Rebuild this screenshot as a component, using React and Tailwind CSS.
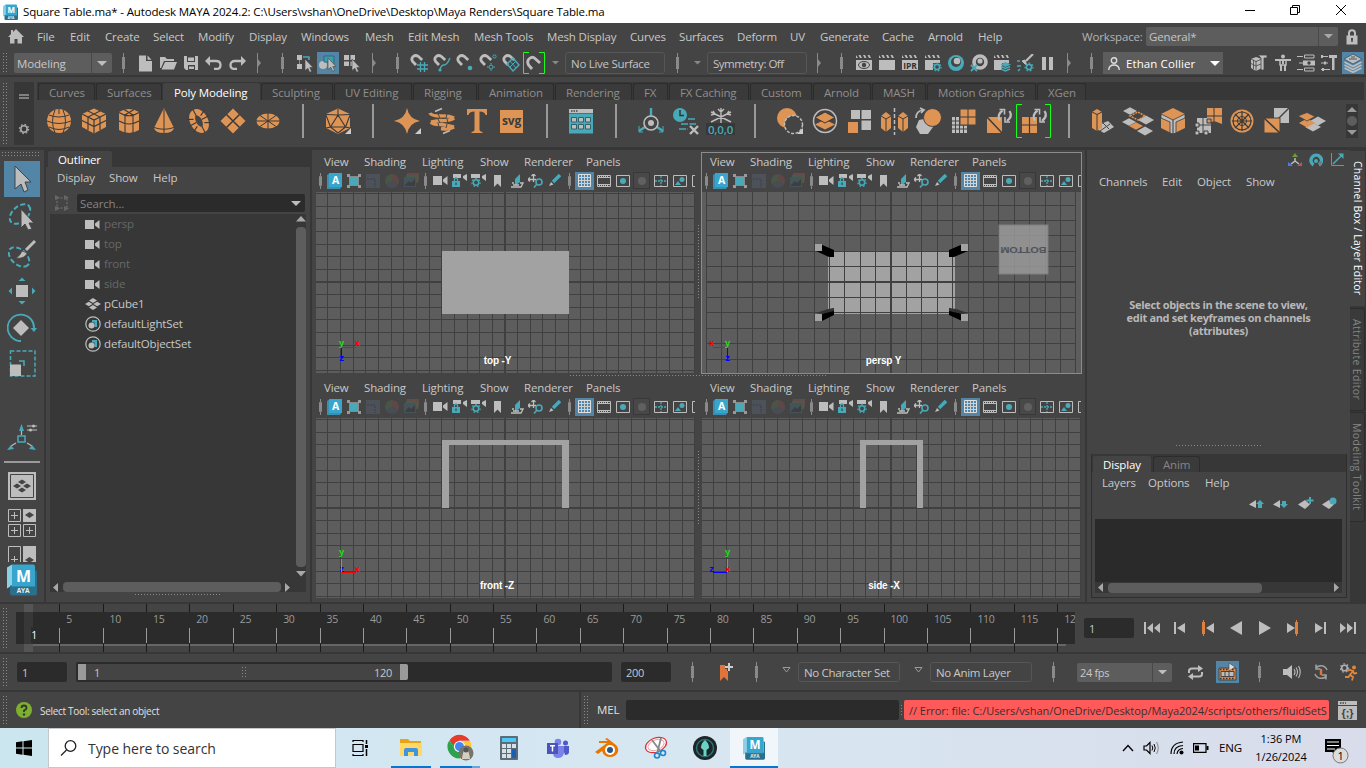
import React from "react";

const O = "#de9455";
const G = "#bdbdbd";
const T = "#48aab9";
const D = "#3a3a3a";

const DOTS = "bg-[conic-gradient(at_1px_1px,transparent_75%,#8a8a8a_0)] bg-[size:3px_3px]";

function Svg({ w = 18, h, vb, children, className = "" }) {
  return (
    <svg width={w} height={h || w} viewBox={vb || `0 0 ${w} ${h || w}`} fill="none" className={`shrink-0 ${className}`}>
      {children}
    </svg>
  );
}

function Sep({ className = "" }) {
  return (
    <div className={`flex h-5 w-[3px] shrink-0 flex-col items-center ${className}`}>
      <div className="h-[4px] w-px bg-[#8a8a8a]" />
      <div className="h-[12px] w-[3px] bg-[#8a8a8a]" />
      <div className="h-[4px] w-px bg-[#8a8a8a]" />
    </div>
  );
}

function Collapse({ className = "" }) {
  return (
    <Svg w={5} h={20} className={className}>
      <path d="M.5 0V20" stroke="#8a8a8a" />
      <path d="M0 5L4 10L0 15Z" fill="#8a8a8a" />
    </Svg>
  );
}

function Down({ className = "", fill = "#a8a8a8", w = 8 }) {
  return (
    <Svg w={w} h={w / 2} vb="0 0 8 4" className={className}>
      <path d="M0 0H8L4 4Z" fill={fill} />
    </Svg>
  );
}

/* ---------- Title bar ---------- */

function MayaLogo({ w, h, className = "" }) {
  return (
    <Svg w={w} h={h} vb="0 0 30 32" className={className}>
      <path d="M0 4L5 1V22L0 25Z" fill="#8ad0e6" />
      <path d="M3 22H28V6L30 8V30Q30 32 28 32H5Q3 32 3 30Z" fill="#2c6f8a" />
      <path d="M5 1H26Q28 1 28 3V23H5Z" fill="#38a5cc" />
      <text x="16.5" y="18" fill="#fff" fontSize="16" fontWeight="700" fontFamily="Open Sans, sans-serif" textAnchor="middle">M</text>
      <text x="16" y="29.8" fill="#e6f2f6" fontSize="6.5" fontWeight="700" fontFamily="Open Sans, sans-serif" textAnchor="middle">AYA</text>
    </Svg>
  );
}

function TitleBar() {
  return (
    <div className="flex h-[23px] items-center bg-white text-black">
      <MayaLogo w={15} h={16} className="ml-[3px]" />
      <span className="ml-[5px] text-[11.5px] tracking-[-0.13px]">
        Square Table.ma* - Autodesk MAYA 2024.2: C:\Users\vshan\OneDrive\Desktop\Maya Renders\Square Table.ma
      </span>
      <div className="ml-auto flex items-center pb-[3px] pr-[20px]">
        <Svg w={10} h={10}><path d="M0 5.5H10" stroke="#000" /></Svg>
        <Svg w={10} h={10} className="ml-[35px]"><path d="M.5 2.5H7.500V9.500H.5ZM2.500 2.500V.5H9.500V7.500H7.500" stroke="#000" /></Svg>
        <Svg w={10} h={10} className="ml-[36px]"><path d="M0 0L10 10M10 0L0 10" stroke="#000" /></Svg>
      </div>
    </div>
  );
}

/* ---------- Menu bar ---------- */

const MENUS = [
  ["File", "w-[33px]"], ["Edit", "w-[35px]"], ["Create", "w-[48px]"], ["Select", "w-[45px]"], ["Modify", "w-[51px]"],
  ["Display", "w-[52px]"], ["Windows", "w-[64px]"], ["Mesh", "w-[43px]"], ["Edit Mesh", "w-[66px]"],
  ["Mesh Tools", "w-[73px]"], ["Mesh Display", "w-[83px]"], ["Curves", "w-[49px]"], ["Surfaces", "w-[58px]"],
  ["Deform", "w-[53px]"], ["UV", "w-[30px]"], ["Generate", "w-[62px]"], ["Cache", "w-[46px]"], ["Arnold", "w-[50px]"],
  ["Help", "w-[104px]"],
];

function MenuBar() {
  return (
    <div className="flex h-[27px] items-center">
      <Svg w={16} h={15} className="ml-2"><path d="M8 0L16 8H14V14.500H9.500V10H6.500V14.500H2V8H0L3 5V1H5V3Z" fill={G} /></Svg>
      <div className="ml-[13px] flex text-[#c8c8c8]">
        {MENUS.map(([t, w]) => <span key={t} className={`shrink-0 ${w}`}>{t}</span>)}
      </div>
      <span className="w-[64px] shrink-0 text-[#b4b4b4]">Workspace:</span>
      <div className="flex h-[19px] w-[192px] shrink-0 rounded-[2px] bg-[#5d5d5d] text-[#c4c4c4]">
        <span className="flex-1 pl-[3px] leading-[20px]">General*</span>
        <span className="flex w-[20px] items-center justify-center border-l border-[#4a4a4a]"><Down w={9} /></span>
      </div>
      <Svg w={12} h={16} className="ml-2"><path d="M3 7V4Q3 1.200 6 1.200T9 4V7" stroke={G} strokeWidth="2" /><path d="M.5 6.500H11.500V15.500H.5Z" fill={G} /><path d="M6 9V13M5 10H7" stroke="#444" strokeWidth="1.500" /></Svg>
    </div>
  );
}

/* ---------- Status line ---------- */

const Cursor = ({ x = 0, y = 0 }) => (
  <path transform={`translate(${x} ${y})`} d="M0 0L8 8.500H4.800L6.600 12.500L4.600 13.300L2.900 9.300L0 11.500Z" fill={G} stroke="#444" strokeWidth=".6" />
);
const Magnet = () => (
  <path d="M6 11L2.600 7.500Q.8 4.500 3.200 2.500T8.200 2.300L12.200 6" stroke={G} strokeWidth="2.800" />
);
const Clap = ({ cut }) => (
  <g>
    <path d="M1 1L3 4H1ZM3.500 1H5.500L7 4H5ZM8 1H10L11.500 4H9.500ZM12.500 1H14.500L16 4H14Z" fill={G} />
    <path d={cut ? "M1 6H16V9H9V16H1Z" : "M1 6H17V16H1Z"} fill={G} />
  </g>
);
const Gear = ({ x, y, r = 3, c = T, w = 1.6 }) => (
  <g transform={`translate(${x} ${y})`} stroke={c}>
    <circle r={r} strokeWidth={w} />
    <circle r={r + w / 2 + 0.6} strokeWidth="1.200" strokeDasharray="1.600 2" />
  </g>
);

function BlueBox({ children, className = "w-[22px]" }) {
  return <div className={`flex h-[22px] shrink-0 items-center justify-center bg-[#5285a6] ${className}`}>{children}</div>;
}

function StatusLine() {
  return (
    <div className="flex h-[27px] items-center border-b-2 border-[#373737] pt-px">
      <div className={`ml-[3px] h-[20px] w-[5px] ${DOTS}`} />
      <div className="ml-[6px] flex h-5 w-[98px] shrink-0 rounded-[2px] bg-[#5d5d5d] text-[#c8c8c8]">
        <span className="flex-1 pl-[3px] leading-[21px]">Modeling</span>
        <span className="flex w-[21px] items-center justify-center border-l border-[#484848]"><Down w={10} fill="#bdbdbd" /></span>
      </div>
      <Sep className="ml-[10px]" />
      <Svg w={13} h={17} className="ml-[14px]"><path d="M0 .5H7V6H13V16.500H0ZM8.500 .5L12.500 4.800H8.500Z" fill={G} /></Svg>
      <Svg w={17} h={14} className="ml-[8px]"><path d="M0 1H5L7 3H14V5H4L1 12H0ZM5 6H17L14 13.500H1.500Z" fill={G} /></Svg>
      <Svg w={14} h={14} className="ml-[7px]"><path d="M0 0H14V14H2L0 12Z" fill={G} /><path d="M3 0H11V6H3ZM4 9H11V14H4Z" fill="#444" /><path d="M4 1.500H10V5H4ZM8 10.500H10V13H5V10.500Z" fill={G} /></Svg>
      <Svg w={17} h={14} className="ml-[7px]"><path d="M5 0V10L0 5Z" fill={G} /><path d="M4 5H11Q15.500 5 15.500 9T11 13H9" stroke={G} strokeWidth="2.300" /></Svg>
      <Svg w={17} h={14} className="ml-[7px]"><path d="M12 0V10L17 5Z" fill={G} /><path d="M13 5H6Q1.500 5 1.500 9T6 13H8" stroke={G} strokeWidth="2.300" /></Svg>
      <Collapse className="ml-[11px]" />
      <Sep className="ml-[19px]" />
      <Svg w={18} h={19} className="ml-[12px]"><path d="M1 1H6V6H1ZM1 10H6V15H1Z" fill={G} /><path d="M3.500 6V10" stroke={T} /><path d="M7 3H13V6" stroke={T} strokeWidth="1.500" /><Cursor x={9} y={5} /></Svg>
      <BlueBox className="ml-[3px] w-[22px]"><Svg w={20} h={20}><circle cx="5" cy="12" r="4" fill={G} /><path d="M6 3H16V14H11V9H6Z" fill="#2fa3b6" stroke="#3a6478" /><Cursor x={10} y={5} /></Svg></BlueBox>
      <Svg w={18} h={19} className="ml-[4px]"><path d="M1 1H6V6H1ZM7.500 1H12V6H7.500ZM1 7.500H6V12H1ZM7.500 7.500H10V12H7.500Z" fill={G} /><Cursor x={9} y={5} /></Svg>
      <Collapse className="ml-[11px]" />
      <Sep className="ml-[19px]" />
      <Svg w={18} h={18} className="ml-[11px]"><Magnet /><path d="M10.500 8V18M14.500 8V18M7 11H18M7 15H18" stroke={T} strokeWidth="1.300" /></Svg>
      <Svg w={18} h={18} className="ml-[5px]"><Magnet /><path d="M7 16Q8 11 11 11T17 4" stroke={T} strokeWidth="1.500" /><circle cx="7" cy="16" r="1.600" fill={T} /></Svg>
      <Svg w={18} h={18} className="ml-[5px]"><Magnet /><circle cx="14" cy="14" r="2.300" fill={T} /></Svg>
      <Svg w={18} h={18} className="ml-[5px]"><Magnet /><circle cx="12" cy="13" r="2" stroke={T} /><circle cx="15.500" cy="2.500" r="1.600" stroke={T} /><path d="M12 9V10.500M12 15.500V17M8 13H9.500M14.500 13H16" stroke={T} /></Svg>
      <Svg w={18} h={18} className="ml-[5px]"><Magnet /><path d="M11 4L17 11L11 17L5 10Z" stroke={T} strokeWidth="1.400" /><path d="M8 7L14 14M8 13L14 7" stroke={T} /></Svg>
      <Svg w={22} h={22} className="ml-[3px]"><path d="M6 .5H.5V21.500H6M16 .5H21.500V21.500H16" stroke="#17ff17" /><path d="M9 17L5.500 13Q3.500 9 6.500 6.500T12 6.500L17 11" stroke={G} strokeWidth="2.900" /></Svg>
      <Down className="ml-[7px]" w={7} fill="#888" />
      <div className="ml-[6px] h-[22px] w-[100px] shrink-0 rounded-[3px] border border-[#565656] pl-[5px] leading-[21px] tracking-[-0.28px] text-[#c4c4c4]">No Live Surface</div>
      <Sep className="ml-[11px]" />
      <Down className="ml-[15px]" w={7} fill="#888" />
      <div className="ml-[6px] h-[22px] w-[100px] shrink-0 rounded-[3px] border border-[#565656] pl-[5px] leading-[21px] tracking-[-0.5px] text-[#c4c4c4]">Symmetry: Off</div>
      <Collapse className="ml-[10px]" />
      <Sep className="ml-[18px]" />
      <Svg w={18} h={18} className="ml-[12px]"><Clap /><ellipse cx="9" cy="11" rx="5.500" ry="3.500" stroke="#444" /><circle cx="9" cy="11" r="2.200" fill="#444" /></Svg>
      <Svg w={18} h={18} className="ml-[5px]"><Clap /></Svg>
      <Svg w={18} h={18} className="ml-[5px]"><Clap /><text x="9" y="14.500" fontSize="8.500" fontWeight="700" fill="#333" textAnchor="middle" fontFamily="Open Sans">IPR</text></Svg>
      <Svg w={18} h={18} className="ml-[5px]"><Clap cut /><Gear x={13} y={13} r={2.6} /></Svg>
      <Svg w={18} h={18} className="ml-[5px]"><circle cx="9" cy="9" r="8" fill={T} /><circle cx="9" cy="8" r="5" fill="#444" /><circle cx="10" cy="7" r="3.300" fill={G} /></Svg>
      <Svg w={18} h={18} className="ml-[5px]"><circle cx="10" cy="8" r="6" stroke={G} strokeWidth="3.600" /><circle cx="10" cy="7" r="2.600" fill={G} /><path d="M1 11L7 17M7 11L1 17" stroke={T} strokeWidth="1.800" /></Svg>
      <Svg w={18} h={18} className="ml-[5px]"><Clap cut /><path d="M12.500 8L18 10.500L12.500 13L7.500 10.500Z" fill={T} /><path d="M8 12.500L12.500 14.500L17 12.500M8 15L12.500 17L17 15" stroke={T} strokeWidth="1.400" /></Svg>
      <Svg w={18} h={18} className="ml-[5px]"><path d="M17 0L10 7" stroke={G} strokeWidth="2.200" /><path d="M6 7L11 12L9 6Z" fill={G} stroke={G} /><Gear x={13} y={13} r={2.6} /><path d="M1 7H4M1 12H5M4 15L2 17" stroke={T} strokeWidth="1.500" /></Svg>
      <Svg w={11} h={13} className="ml-[8px]"><path d="M0 0H4V13H0ZM7 0H11V13H7Z" fill={G} /></Svg>
      <Collapse className="ml-[14px]" />
      <Sep className="ml-[18px]" />
      <div className="ml-[10px] flex h-[22px] w-[120px] shrink-0 items-center bg-[#5d5d5d] text-[11.5px] tracking-[0.1px] text-white">
        <Svg w={12} h={13} className="ml-[5px]"><circle cx="6" cy="3.500" r="2.700" stroke="#ddd" strokeWidth="1.400" /><path d="M.7 13Q1 8 6 8T11.300 13" stroke="#ddd" strokeWidth="1.400" /></Svg>
        <span className="ml-[6px] pt-px">Ethan Collier</span>
        <Down className="ml-auto mr-[3px]" w={10} fill="#fff" />
      </div>
      <Svg w={18} h={18} className="ml-[27px]"><path d="M1 5L6 3L12 5V14L6 17L1 14Z" fill={G} /><path d="M1 5L6 7.500L12 5M6 7V17M1 9.500L6 12L12 9.500M3.500 6V15" stroke="#444" strokeWidth=".8" /><path d="M8 1H17V4H14V16H11V4Z" fill={G} stroke="#444" strokeWidth=".8" /></Svg>
      <Svg w={18} h={18} className="ml-[6px]"><circle cx="9" cy="2.500" r="2" fill={G} /><path d="M1 6H17M9 5V10" stroke={G} strokeWidth="2" /><path d="M6 6H12V11H6Z" stroke={G} strokeWidth="1.500" /><path d="M7 11V17M11 11V17" stroke={G} strokeWidth="2" /></Svg>
      <Svg w={18} h={18} className="ml-[5px]"><path d="M0 2.500H6M2 9H6M0 15.500H6" stroke={G} /><path d="M7.500 1H17V4H7.500ZM7.500 14H17V17H7.500Z" stroke={G} /><path d="M6 6.500H18V11.500H6Z" fill={G} /><circle cx="12" cy="9" r="1.700" fill="#444" /></Svg>
      <Svg w={18} h={18} className="ml-[5px]"><path d="M1 2.500H8M1 9H8M1 15.500H10" stroke={G} /><path d="M2 1V4M5 7.500V10.500M3 14V17" stroke={G} strokeWidth="2" /><path d="M9 1H17V4H14.500V16H12V4H9Z" fill={G} /></Svg>
      <BlueBox className="ml-[4px] w-[22px]"><Svg w={20} h={20}><path d="M10 1L19 6L10 11L1 6Z" fill={G} stroke="#3d6480" /><path d="M1.500 9L10 13.500L18.500 9M1.500 12L10 16.500L18.500 12M1.500 15L10 19.300L18.500 15" stroke={G} strokeWidth="1.600" /><path d="M6 6H14M8 4H12" stroke="#555" /></Svg></BlueBox>
    </div>
  );
}

/* ---------- Shelf ---------- */

const TABS = [
  ["Curves", "w-[57px]"], ["Surfaces", "w-[66px]"], ["Poly Modeling", "w-[97px]"], ["Sculpting", "w-[72px]"],
  ["UV Editing", "w-[78px]"], ["Rigging", "w-[64px]"], ["Animation", "w-[76px]"], ["Rendering", "w-[77px]"], ["FX", "w-[35px]"],
  ["FX Caching", "w-[80px]"], ["Custom", "w-[62px]"], ["Arnold", "w-[58px]"], ["MASH", "w-[54px]"],
  ["Motion Graphics", "w-[109px]"], ["XGen", "w-[49px]"],
];

const Rot = () => (
  <g stroke={G} strokeWidth="2.200">
    <path d="M16.500 2.500Q10.500 7 14 12.500" /><path d="M21 13Q27 8.500 23.500 3" />
    <path d="M13.500 1.500H18.500V6.500M24 14H19V9" strokeWidth="1.600" />
  </g>
);
const Dia = ({ x, y, s = 5, c = G, k = 0.55 }) => <path d={`M${x - s} ${y}L${x} ${y - s * k}L${x + s} ${y}L${x} ${y + s * k}Z`} fill={c} />;
const Corner = ({ x = 25, y = 25 }) => <path d={`M${x} ${y}V${y - 6}L${x - 6} ${y}Z`} fill="#ccc" />;

const SHELF = [
  <g key="sphere"><circle cx="13" cy="13" r="12" fill={O} /><path d="M1 13Q13 18 25 13M3 7Q13 11 23 7M3 19Q13 24 23 19M13 1V6M9 2Q4 13 9 25M17 2Q22 13 17 25" stroke={D} /></g>,
  <g key="cube"><path d="M13 .5L25 6V19L13 25.500L1 19V6Z" fill={O} /><path d="M1 6L13 12L25 6M13 12V25.500M1 12.500L13 18.500L25 12.500M7 3L19 9V22M19 3L7 9V22" stroke={D} strokeWidth="1.200" /></g>,
  <g key="cyl"><path d="M3 4Q13-2 23 4V22Q13 28 3 22Z" fill={O} /><path d="M3 4.500Q13 11 23 4.500M3 13Q13 19 23 13M9 8V25M17 8V25M8 1.500L18 7.500M18 1.500L8 7.500" stroke={D} strokeWidth="1.100" /></g>,
  <g key="cone"><path d="M13 0L23 20Q22 25 13 25T3 20Z" fill={O} /><path d="M13 1V25M3 19.500Q13 23 23 19.500" stroke={D} /></g>,
  <g key="torus" transform="rotate(-28 13 13)"><ellipse cx="13" cy="13" rx="6" ry="9.500" stroke={O} strokeWidth="6" /><path d="M3 6L9 9M23 6L17 9M3 20L9 17M23 20L17 17M13 0V7M13 19V26M2 13H10M16 13H24" stroke={D} strokeWidth="1.100" /></g>,
  <g key="plane"><path d="M13 .5L25.500 13L13 25.500L.5 13Z" fill={O} /><path d="M6.500 6.500L19.500 19.500M19.500 6.500L6.500 19.500" stroke={D} strokeWidth="1.500" /></g>,
  <g key="disc"><ellipse cx="13" cy="13" rx="11.500" ry="7.500" fill={O} /><path d="M1 13H25M13 5V21M5 7.500L21 18.500M21 7.500L5 18.500" stroke={D} /></g>,
  null,
  <g key="plat"><path d="M13 .5L25 6V20L13 26L1 20V6Z" fill={O} /><path d="M13 1V7L5.500 19H20.500L13 7M1 6.500L13 7L25 6.500M1 7L5.500 19L1 20M25 7L20.500 19L25 20M5.500 19L13 25L20.500 19" stroke={D} strokeWidth="1.100" /><Corner x={26} y={26} /></g>,
  null,
  <g key="star"><path d="M13 0Q15 11 26 13Q15 15 13 26Q11 15 0 13Q11 11 13 0Z" fill={O} /><Corner x={27} y={26} /></g>,
  <g key="helix"><path d="M13 .5L6 3.500M21 22.500L14 25.500" stroke={G} strokeWidth="1.600" /><path d="M1 5Q2 8 12 8Q20 7.500 25 10M25 10Q22 13 11 12.500L2 14M2 14Q4 17 13 16.500L25 19M25 19Q21 22 12 20.500" stroke={O} strokeWidth="3.400" /><path d="M9 6L11 10M18 6L17 10M9 11L11 15M18 11L19 15M9 15L10 19M18 16L17 20" stroke="#444" /></g>,
  <path key="T" d="M3 1H23V7H21.500Q21 3.500 15.500 3.500V22Q15.500 23.500 18.500 24V25H7.500V24Q10.500 23.500 10.500 22V3.500Q5 3.500 4.500 7H3Z" fill={O} />,
  <g key="svg"><path d="M1 2H24V25H1Z" fill={O} /><text x="12.500" y="16.500" fontSize="12" fontWeight="700" fill="#3c3c3c" textAnchor="middle" fontFamily="Open Sans">svg</text></g>,
  null,
  <g key="win"><path d="M1 5.500H25V25.500H1Z" fill={T} /><path d="M1 1H25V5H1Z" fill={G} /><path d="M3 3H10" stroke="#444" strokeWidth="1.500" strokeDasharray="1.500 1" /><path d="M3.500 9.500H8.500V14H3.500ZM10.500 9.500H15.500V14H10.500ZM17.500 9.500H22.500V14H17.500ZM3.500 16.500H8.500V21H3.500ZM10.500 16.500H15.500V21H10.500ZM17.500 16.500H22.500V21H17.500Z" fill={G} stroke="#33606a" /></g>,
  null,
  <g key="pivot"><path d="M13 0V8M7 19L1 23M19 19L25 23" stroke={T} strokeWidth="2.400" /><path d="M1 18V24H5M25 18V24H21" stroke={T} /><circle cx="13" cy="15" r="7" stroke={G} strokeWidth="1.600" /><circle cx="13" cy="15" r="3" fill={G} /></g>,
  <g key="clock"><circle cx="7" cy="7" r="7" fill={T} /><path d="M7 2V7.500H11" stroke="#333" strokeWidth="1.500" /><path d="M15 11H23M8 16H23M6 21H15" stroke={T} strokeWidth="1.500" strokeDasharray="7 1.500" /><path d="M17 18L25 26M25 18L17 26" stroke={G} strokeWidth="2.400" /></g>,
  <g key="snow"><path d="M13 0V17M3 4L23 14M23 4L3 14M10 1L13 4L16 1M3 7L7 6L5 3M23 7L19 6L21 3" stroke={G} strokeWidth="1.400" /><path d="M-2 15H27V27H-2Z" fill="#383838" /><text x="12.500" y="25.500" fontSize="11.5" fontWeight="600" fill={T} textAnchor="middle" fontFamily="Open Sans">0,0,0</text></g>,
  null,
  <g key="bool"><circle cx="10" cy="10" r="10" fill={O} /><circle cx="16.500" cy="16.500" r="9" fill="#444" stroke={G} strokeWidth="1.500" strokeDasharray="3 1.500" /><Corner x={26} y={26} /></g>,
  <g key="layers"><circle cx="13" cy="13" r="11.500" stroke={G} strokeWidth="1.500" /><Dia x={13} y={16.500} s={10} c={O} k={0.5} /><path d="M3 9.500L13 4L23 9.500L13 15Z" fill={O} stroke={D} /></g>,
  <g key="sep4"><path d="M4 2H13V11H4ZM14.500 2H24V11H14.500ZM14.500 12.500H24V22H14.500Z" fill={G} /><path d="M1 14H11V25H1Z" fill={O} /></g>,
  <g key="mirror"><path d="M-1 8L4 4L9 8V20L4 24L-1 20ZM16 8L21 4L26 8V20L21 24L16 20Z" fill={O} /><path d="M-1 8L4 11L9 8M4 11V24M16 8L21 11L26 8M21 11V24" stroke={D} /><path d="M12.500 0V27" stroke={G} strokeWidth="1.500" strokeDasharray="4 2" /></g>,
  <g key="smooth"><path d="M3 12L13 10L17 19L12 26H4L0 19Z" fill={G} /><circle cx="16.500" cy="9.500" r="9" fill={O} stroke="#444" /><path d="M0 10Q0 3 7 2M4 0L8 2L5 5" stroke={G} strokeWidth="1.700" /></g>,
  <g key="retopo"><path d="M1 9H16V25H1Z" fill={G} /><path d="M4.500 9V25M8.500 9V25M12.500 9V25M1 13H16M1 17H16M1 21H16" stroke="#444" /><path d="M9 1H25V17H9Z" fill={O} stroke="#444" /><path d="M17 1V17M9 9H25" stroke={D} /></g>,
  <g key="tri"><path d="M1 9H16V25H1Z" fill={O} /><path d="M1 9L16 25" stroke={D} strokeWidth="1.500" /><Rot /></g>,
  <g key="quad"><path d="M1 9H16V25H1Z" fill={O} /><path d="M8.500 9V25M1 17H16" stroke={D} strokeWidth="1.200" /><Rot /></g>,
  null,
  <g key="extr"><path d="M13 15L18 13L24 19L14 25L7 21Z" fill={G} /><path d="M10 23L20 16M13 15L19 21" stroke="#444" /><path d="M2 4L7 1L12 4V20L7 23L2 20Z" fill={O} /><path d="M2 4L7 6.500L12 4M7 6.500V23" stroke={D} /></g>,
  <g key="bridge"><Dia x={5} y={3} s={7} /><Dia x={21} y={12} s={8} /><Dia x={4} y={14} s={7} /><Dia x={11} y={18} s={7} c={O} /><Dia x={20} y={23} s={8} /><path d="M5 8L13 4L20 8L13 12Z" stroke={O} strokeWidth="1.500" strokeDasharray="2 1" /></g>,
  <g key="bevel"><path d="M13 0L25 6V20L13 26L1 20V6Z" fill={O} /><path d="M1 6L13 12L25 6L25 10L16 14V25L13 26L10 25V14L1 10Z" fill={G} stroke={D} strokeWidth=".8" /><path d="M13 12V26" stroke={D} /></g>,
  <g key="merge"><path d="M12 0H27V16L19 13L12 16Z" fill={O} /><path d="M19 0V13M12 8H27" stroke={D} /><path d="M2 10H16V25H2Z" fill={G} /><path d="M8 10V25M2 17H16" stroke="#444" /><path d="M12 11H16V15H12Z" fill={O} stroke={D} /><path d="M0 15H4V19H0ZM0 23H4V27H0ZM9 23H13V27H9Z" fill={G} stroke={D} /></g>,
  <g key="wheel"><circle cx="13" cy="13" r="11.500" fill={O} /><circle cx="13" cy="13" r="9" stroke={D} strokeWidth="1.200" /><circle cx="13" cy="13" r="4.500" stroke={D} /><path d="M13 3V23M3 13H23M6 6L20 20M20 6L6 20" stroke={D} strokeWidth="1.200" /></g>,
  <g key="append"><path d="M10 0H25V15H10Z" fill={G} /><path d="M25 0L10 15" stroke="#444" strokeWidth="1.500" /><path d="M0 10H16V25H0Z" fill={O} stroke="#444" /><path d="M0 10L16 25" stroke={D} strokeWidth="1.500" /></g>,
  <g key="fill"><Dia x={19} y={13} s={8} /><Dia x={14} y={19} s={8} /><Dia x={8} y={15} s={8} c={O} /><path d="M-1 8L8 4.500L16 8.500L8 13Z" fill={O} stroke="#444" strokeWidth=".8" /></g>,
];

function Shelf() {
  return (
    <div className="flex h-[71px] border-b-[3px] border-[#373737] pt-[3px]">
      <div className={`ml-[3px] mt-px h-[62px] w-[5px] shrink-0 ${DOTS}`} />
      <div className="ml-[6px] flex h-[63px] w-5 shrink-0 flex-col items-center bg-[#373737]">
        <Svg w={10} h={5} className="mt-[12px]"><path d="M0 1H10M0 4H10" stroke="#999" strokeWidth="1.500" /></Svg>
        <Svg w={12} h={12} className="mt-[24px]"><Gear x={6} y={6} r={3.2} c="#aaa" w={1.6} /></Svg>
      </div>
      <div className="ml-[3px] w-[1327px]">
        <div className="flex h-[18px] gap-px bg-[#373737] pl-px pt-px">
          {TABS.map(([t, w]) => (
            <div key={t} className={`${w} shrink-0 rounded-t-[3px] ${t === "Poly Modeling" ? "bg-[#444] pl-[11px] leading-[20px] text-white" : "border border-b-0 border-[#2c2c2c] bg-[#3a3a3a] pl-[10px] leading-[18px] text-[#8e8e8e]"}`}>
              {t}
            </div>
          ))}
        </div>
        <div className="flex h-[42px] items-center pl-[5px]">
          {SHELF.map((g, i) => (
            <div key={i} className="flex w-[34.81px] shrink-0 items-center justify-center">
              {!g ? <div className="h-[34px] w-[2px] bg-[#9a9a9a]" /> : g.key === "quad" ? (
                <div className="relative flex h-[34px] w-[35px] items-center justify-center">
                  <Svg w={28} h={28} vb="-1 -1 28 28">{g}</Svg>
                  <Svg w={35} h={34} className="absolute left-0 top-0"><path d="M6 .5H.5V33.500H6M29 .5H34.500V33.500H29" stroke="#17ff17" /></Svg>
                </div>
              ) : <Svg w={28} h={28} vb="-1 -1 28 28" className="overflow-visible">{g}</Svg>}
            </div>
          ))}
          <div className="ml-[17px] flex h-[34px] w-3 flex-col items-center justify-between bg-[#373737] py-[3px]">
            <Svg w={10} h={5}><path d="M0 5L5 0L10 5Z" fill="#999" /></Svg>
            <div className="size-[10px] rounded-full bg-[#5d5d5d]" />
            <Svg w={10} h={5}><path d="M0 0L5 5L10 0Z" fill="#999" /></Svg>
          </div>
        </div>
      </div>
    </div>
  );
}

/* ---------- Tool box ---------- */

function ToolBox() {
  return (
    <div className="flex h-[452px] w-[44px] shrink-0 flex-col items-start overflow-hidden">
      <div className={`ml-[2px] mt-[2px] h-[4px] w-[38px] shrink-0 ${DOTS}`} />
      <div className="ml-1 mt-[5px] flex size-9 shrink-0 items-center justify-center bg-[#5285a6] pl-[2px]">
        <Svg w={18} h={28}><path d="M1 1L17 17H11L14 25L10 27L7 19L1 24Z" fill={G} stroke="#444" /></Svg>
      </div>
      <Svg w={28} h={30} className="ml-[8px] mt-[5px]"><ellipse cx="12" cy="12" rx="12" ry="7.500" transform="rotate(-42 12 12)" stroke={T} strokeWidth="2" strokeDasharray="5 2.500" /><path d="M13 7L26 21H21L24 27L20 28L17 22L13 26Z" fill={G} stroke="#444" /></Svg>
      <Svg w={28} h={30} className="ml-[8px] mt-[7px]"><ellipse cx="11" cy="18" rx="12" ry="7.500" transform="rotate(42 11 18)" stroke={T} strokeWidth="2" strokeDasharray="5 2.500" /><path d="M27 2L18 11" stroke={G} strokeWidth="3" /><path d="M8 19Q12 17 14 12L19 14Q17 20 8 19Z" fill={G} stroke="#444" strokeWidth=".7" /></Svg>
      <Svg w={28} h={28} className="ml-[8px] mt-[8px]"><path d="M8 8H20V20H8Z" fill={G} /><path d="M10.500 4L14 .5L17.500 4ZM10.500 24L14 27.500L17.500 24ZM4 10.500L.5 14L4 17.500ZM24 10.500L27.500 14L24 17.500Z" fill={T} /></Svg>
      <Svg w={30} h={30} className="ml-[7px] mt-[8px]"><path d="M14 28A13.200 13.200 0 1 1 27 16" stroke={T} strokeWidth="1.800" /><path d="M23.500 15H30L27 19Z" fill={T} /><path d="M14 7L22 15L14 23L6 15Z" fill={G} /></Svg>
      <Svg w={27} h={28} className="ml-[9px] mt-[7px]"><path d="M1.500 1H26V26H1.500Z" stroke={T} strokeWidth="1.500" strokeDasharray="4 2" /><path d="M10 11H15V16" stroke={T} strokeWidth="1.500" /><path d="M1 14.500H12V26H1Z" fill={G} /></Svg>
      <Svg w={32} h={28} className="ml-[7px] mt-[45px]"><path d="M14.500 8V12M9 20L4 23M20 20L25 23" stroke={G} strokeWidth="1.200" /><path d="M14.500 1L17 8H12ZM0 27L4 22L7 26ZM29 27L25 22L22 26Z" fill={T} /><path d="M11 13H18V19H11Z" stroke={T} strokeWidth="1.500" /><path d="M20 3H30M20 7H30" stroke={G} /><circle cx="26.500" cy="3" r="1.500" fill={G} /><circle cx="23.500" cy="7" r="1.500" fill={G} /></Svg>
      <div className="ml-1 mt-[10px] h-[2px] w-9 shrink-0 bg-[#9a9a9a]" />
      <Svg w={28} h={28} className="ml-[8px] mt-[9px]"><path d="M0 0H28V28H0Z" fill={G} /><path d="M2.500 2.500H25.500V25.500H2.500Z" stroke="#444" /><Dia x={14} y={10} s={4} c="#444" k={0.65} /><Dia x={14} y={18} s={4} c="#444" k={0.65} /><Dia x={9} y={14} s={4} c="#444" k={0.65} /><Dia x={19} y={14} s={4} c="#444" k={0.65} /></Svg>
      <Svg w={28} h={28} className="ml-[8px] mt-[9px]"><path d="M.5 .5H12.500V12.500H.5ZM.5 15.500H12.500V27.500H.5ZM15.500 15.500H27.500V27.500H15.500Z" stroke={G} /><path d="M3 6.500H10M6.500 3V10M3 21.500H10M6.500 18V25M18 21.500H25M21.500 18V25" stroke={G} /><path d="M15 0H28V13H15Z" fill={G} /><Dia x={21.500} y={6} s={4.500} c="#444" k={0.65} /></Svg>
      <Svg w={28} h={16} className="ml-[8px] mt-[9px]"><path d="M.5 17V.5H12.500V17" stroke={G} /><path d="M3 13.500H10M6.500 10V16" stroke={G} /><path d="M15 0H28V16H15Z" fill={G} /><Dia x={21.500} y={14} s={4.500} c="#444" k={0.65} /></Svg>
      <MayaLogo w={30} h={33} className="ml-[7px] mt-px" />
    </div>
  );
}

/* ---------- Outliner ---------- */

const Cam = () => <Svg w={15} h={9}><path d="M0 0H9V9H0ZM14.500 0V9L10 5.500V3.500Z" fill={G} /></Svg>;
const SetIcon = () => <Svg w={16} h={16}><circle cx="8" cy="8" r="7.200" stroke={G} strokeWidth="1.200" /><path d="M7 4H12V11H9.500V6.500H7Z" fill={T} /><circle cx="6.500" cy="9.500" r="3" fill={G} /></Svg>;
const MeshIcon = () => <Svg w={16} h={12}><Dia x={8} y={2.5} s={4} k={0.6} /><Dia x={8} y={9.5} s={4} k={0.6} /><Dia x={3.8} y={6} s={3.800} k={0.6} /><Dia x={12.200} y={6} s={3.800} k={0.6} /></Svg>;

const TREE = [
  ["persp", Cam, 0], ["top", Cam, 0], ["front", Cam, 0], ["side", Cam, 0],
  ["pCube1", MeshIcon, 1], ["defaultLightSet", SetIcon, 1], ["defaultObjectSet", SetIcon, 1],
];

function Outliner() {
  return (
    <div className="flex h-[452px] w-[268px] shrink-0 flex-col border-x-2 border-[#373737] bg-[#444]">
      <div className="flex h-[17px] shrink-0 bg-[#373737] pl-[2px] pt-px">
        <div className="w-[64px] rounded-t-[2px] bg-[#444] pl-[10px] leading-[18px] text-white">Outliner</div>
      </div>
      <div className="flex h-[27px] shrink-0 pl-[11px] pt-[2px] text-[#c8c8c8]">
        <span className="w-[52px]">Display</span><span className="w-[44px]">Show</span><span>Help</span>
      </div>
      <div className="flex h-[18px] shrink-0 items-center pl-[8px]">
        <Svg w={16} h={16}><path d="M3 3H13V13H3Z" stroke="#666" strokeDasharray="2 1.500" strokeWidth="1.500" /><path d="M1 0L6 2.500L1 5ZM10 0L15 2.500L10 5ZM1 11L6 13.500L1 16ZM10 11L15 13.500L10 16Z" fill="#666" /></Svg>
        <div className="ml-[7px] flex h-[18px] w-[228px] items-center rounded-[2px] bg-[#2b2b2b] pl-[3px] pr-[4px] text-[#858585]">
          <span className="pt-[2px]">Search...</span>
          <Down className="ml-auto" w={10} fill="#bdbdbd" />
        </div>
      </div>
      <div className="ml-[4px] mt-[2px] flex h-[378px] w-[256px] shrink-0 flex-col bg-[#373737]">
        <div className="flex h-[368px]">
          <div className="flex-1">
            {TREE.map(([t, I, on]) => (
              <div key={t} className="flex h-5 items-center pl-[35px]">
                <span className="flex w-[19px]"><I /></span>
                <span className={on ? "text-[#c8c8c8]" : "text-[#686868]"}>{t}</span>
              </div>
            ))}
          </div>
          <div className="flex w-[10px] flex-col items-center">
            <Svg w={10} h={6} className="mt-[2px]"><path d="M0 5.500L5 0L10 5.500Z" fill="#a8a8a8" /></Svg>
            <div className="mt-[5px] h-[340px] w-[10px] rounded-[4px] bg-[#5d5d5d]" />
            <Svg w={10} h={6} className="mt-[4px]"><path d="M0 0L5 5.500L10 0Z" fill="#a8a8a8" /></Svg>
          </div>
        </div>
        <div className="flex h-[10px] items-center pl-[3px]">
          <Svg w={5} h={9}><path d="M5 0V9L0 4.500Z" fill="#a8a8a8" /></Svg>
          <div className="ml-[5px] h-[10px] w-[218px] rounded-[4px] bg-[#5d5d5d]" />
          <Svg w={5} h={9} className="ml-[4px]"><path d="M0 0V9L5 4.500Z" fill="#a8a8a8" /></Svg>
        </div>
      </div>
      <div className={`ml-[89px] mt-[2px] h-px w-[86px] ${DOTS}`} />
    </div>
  );
}

/* ---------- Viewports ---------- */

const VpIcon = ({ children, className = "" }) => <div className={`flex h-[18px] w-[19px] shrink-0 items-center justify-center ${className}`}>{children}</div>;

function VpToolbar() {
  return (
    <div className="flex h-[21px] items-center overflow-hidden pb-[2px]">
      <div className="flex w-[9px] shrink-0 justify-center"><Sep className="scale-y-[.8]" /></div>
      <VpIcon><Svg w={15} h={16}><path d="M0 2L3 0H15V13L13 16H0Z" fill="#3a8eb0" /><path d="M2 0H15V14H2Z" fill="#38a5cc" /><text x="8.500" y="11" fontSize="10.500" fontWeight="700" fill="#fff" textAnchor="middle" fontFamily="Open Sans">A</text></Svg></VpIcon>
      <VpIcon><Svg w={14} h={14}><path d="M2.500 2.500H11.500V11.500H2.500Z" fill={T} stroke="#888" /><path d="M0 0H3V3H0ZM11 0H14V3H11ZM0 11H3V14H0ZM11 11H14V14H11Z" fill="#999" /></Svg></VpIcon>
      <VpIcon className="opacity-35"><Svg w={14} h={14}><path d="M0 0H14V14H0Z" fill="#606a80" /><path d="M1 5H9V13" stroke="#334" strokeDasharray="2 1" /></Svg></VpIcon>
      <VpIcon className="opacity-25"><Svg w={14} h={14}><path d="M7 7L7 0A7 7 0 0 1 13 10.500Z" fill="#a55" /><path d="M7 7L13 10.500A7 7 0 0 1 1 10.500Z" fill="#568" /><path d="M7 7L1 10.500A7 7 0 0 1 7 0Z" fill="#585" /></Svg></VpIcon>
      <VpIcon className="opacity-35"><Svg w={16} h={15}><path d="M4 0H16V8H4Z" fill="#a55" /><path d="M3 2H15V10H3Z" fill="#585" /><path d="M1 4H13V14H1Z" fill="#47708a" /><path d="M2 12L6 8L8 10L12 6V13H2Z" fill="#333" /></Svg></VpIcon>
      <div className="flex w-[11px] shrink-0 justify-center"><Sep className="scale-y-[.8]" /></div>
      <VpIcon><Cam /></VpIcon>
      <VpIcon><Svg w={15} h={13}><path d="M1 0H9V4H1ZM15 0V7L11 4V2Z" fill={G} /><path d="M2.500 7V5Q4 2.500 5.500 5V7" stroke={T} strokeWidth="1.300" /><path d="M0 7H8V13H0Z" fill={T} /><path d="M4 8.500V11" stroke="#333" /></Svg></VpIcon>
      <VpIcon><Svg w={15} h={14}><path d="M0 0H9V4H0ZM15 0V7L11 4V2Z" fill={G} /><circle cx="5" cy="8.500" r="4" fill="#444" /><Gear x={5} y={8.500} r={2.700} /></Svg></VpIcon>
      <VpIcon><Svg w={7} h={12}><path d="M0 0H7V12L3.500 8.500L0 12Z" fill={G} /></Svg></VpIcon>
      <VpIcon><Svg w={14} h={14}><path d="M5 5L10 0V8L5 12Z" fill={T} /><path d="M1 13H11L13 9H10M3 11H9M2 9H4" stroke={G} strokeWidth="1.300" /></Svg></VpIcon>
      <VpIcon><Svg w={15} h={14}><path d="M0 5.500H8M5.500 0V8M3.500 2L5.500 0L7.500 2M2 3.500L0 5.500L2 7.500" stroke={G} strokeWidth="1.300" /><circle cx="11" cy="8" r="3" stroke={T} strokeWidth="1.600" /><path d="M9 10L6 13.500" stroke={T} strokeWidth="1.600" /></Svg></VpIcon>
      <VpIcon><Svg w={13} h={13}><path d="M12 1L5 8" stroke={T} strokeWidth="3.400" /><path d="M1 12L3 8L5.500 10.500Z" fill={G} /></Svg></VpIcon>
      <div className="flex w-[11px] shrink-0 justify-center"><Sep className="scale-y-[.8]" /></div>
      <VpIcon className="bg-[#5285a6]"><Svg w={13} h={13}><path d="M3.500 0V13M6.500 0V13M9.500 0V13M0 3.500H13M0 6.500H13M0 9.500H13" stroke="#d0d0d0" /><path d="M.5 .5H12.500V12.500H.5Z" stroke="#e0e0e0" /></Svg></VpIcon>
      <VpIcon><Svg w={14} h={12}><path d="M.5 .5H13.500V11.500H.5Z" stroke={G} /><path d="M2 1.500H12M2 10.500H12" stroke={G} strokeDasharray="1 1" /><path d="M.5 2.500H13.500M.5 9.500H13.500" stroke={G} /></Svg></VpIcon>
      <VpIcon><Svg w={14} h={12}><path d="M.5 .5H13.500V11.500H.5Z" stroke={G} /><circle cx="7" cy="6" r="3" fill={T} /></Svg></VpIcon>
      <VpIcon><div className="flex size-[17px] items-center justify-center border border-[#383838] bg-[#484848]"><div className="size-2 rounded-full bg-[#606060]" /></div></VpIcon>
      <VpIcon><Svg w={14} h={12}><path d="M.5 .5H13.500V11.500H.5Z" stroke={G} /><path d="M1 6H13M7 1V11" stroke={T} strokeWidth="1.300" strokeDasharray="2 1" /></Svg></VpIcon>
      <VpIcon><Svg w={14} h={12}><path d="M.5 .5H13.500V11.500H.5Z" stroke={G} /><path d="M2 10L5 6L8 10Z" fill={T} /><circle cx="9" cy="4.500" r="2.500" fill={T} /></Svg></VpIcon>
      <VpIcon><Svg w={14} h={12}><path d="M.5 .5H13.500V11.500H.5Z" stroke={G} /></Svg></VpIcon>
    </div>
  );
}

/* Grid lines around an origin inside a 379px wide canvas. */
function Grid({ cx, cy, step, h, n = 20, x0 = 0, x1 = 380 }) {
  const out = [];
  for (let i = -n; i <= n; i++) {
    if (!i) continue;
    const x = Math.round(cx + i * step - 0.5);
    const y = Math.round(cy + i * step - 0.5);
    if (x >= 0 && x < 380) out.push(<path key={`v${i}`} d={`M${x + 0.5} 0V${h}`} />);
    if (y >= 0 && y < h) out.push(<path key={`h${i}`} d={`M${x0} ${y + 0.5}H${x1}`} />);
  }
  return (
    <g stroke="#404040" shapeRendering="crispEdges">
      {out}
      <path d={`M${cx} 0V${h}M${x0} ${cy}H${x1}`} strokeWidth="2" />
    </g>
  );
}

const AX = { fontFamily: "Liberation Sans, sans-serif", fontWeight: 700, fontSize: 9.5, textAnchor: "middle" };
const Line = ({ d, c, w = 1 }) => <path d={d} stroke={c} strokeWidth={w} shapeRendering="crispEdges" />;

function Scene({ kind }) {
  if (kind === "top")
    return (
      <>
        <Grid cx={189} cy={90} step={12.66} h={181} />
        <rect x="126" y="59" width="127" height="63" fill="#a2a2a2" />
        <Line d="M26 155.500H40" c="#f00" /><Line d="M25.500 155V166" c="#00f" />
        <text x="25.500" y="154" fill="#1be01b" {...AX}>y</text><text x="41" y="154" fill="#f00" {...AX}>x</text><text x="25.500" y="169" fill="#00f" {...AX}>z</text>
      </>
    );
  if (kind === "persp")
    return (
      <>
        <rect x="126" y="60" width="127" height="62" fill="#a2a2a2" />
        <Grid cx={189} cy={90} step={15.4} h={181} n={12} x0={5} x1={374} />
        <path d="M118 52L132 58V65L127 65L114 59ZM261 52L247 58V65L252 65L266 59Z" fill="#000" />
        <path d="M132 116V123L120 129V122ZM247 116V123L260 129V122Z" fill="#000" />
        <path d="M114 121L126 117L132 116V119L120 122ZM266 121L254 117L247 116V119L260 122Z" fill="#333" />
        <path d="M113 52H120V59H113ZM259 52H266V59H259ZM113 122H120V129H113ZM259 122H266V129H259Z" fill="#a2a2a2" />
        <rect x="297" y="33" width="49" height="49" fill="#999" opacity=".85" />
        <rect x="297" y="33" width="49" height="49" stroke="#808080" />
        <text x="0" y="0" transform="translate(321.500 54.500) rotate(180)" fontFamily="Liberation Sans, sans-serif" fontSize="9" fontWeight="700" fill="#50535a" textAnchor="middle" textLength="46" lengthAdjust="spacingAndGlyphs">BOTTOM</text>
        <Line d="M11 155.500H25" c="#f00" /><Line d="M25.500 155V166" c="#00f" />
        <text x="25.500" y="154" fill="#1be01b" {...AX}>y</text><text x="9.500" y="154" fill="#f00" {...AX}>x</text><text x="25.500" y="169" fill="#00f" {...AX}>z</text>
      </>
    );
  if (kind === "front")
    return (
      <>
        <Grid cx={189} cy={90} step={12.66} h={180} />
        <path d="M126 22H253V90H246V27H133V90H126Z" fill="#a2a2a2" />
        <text x="25.500" y="153.500" fill="#00f" {...AX}>z</text>
        <Line d="M25.500 141V154" c="#1be01b" /><Line d="M26 154.500H40" c="#f00" />
        <text x="25.500" y="137" fill="#1be01b" {...AX}>y</text><text x="41" y="153.500" fill="#f00" {...AX}>x</text>
      </>
    );
  return (
    <>
      <Grid cx={189} cy={90} step={12.66} h={180} />
      <path d="M158 22H221V90H215V27H164V90H158Z" fill="#a2a2a2" />
      <Line d="M25.500 141V154" c="#1be01b" /><Line d="M11 154.500H25" c="#00f" />
      <text x="25.500" y="153.500" fill="#f00" {...AX}>x</text>
      <text x="25.500" y="137" fill="#1be01b" {...AX}>y</text><text x="9.500" y="153.500" fill="#00f" {...AX}>z</text>
    </>
  );
}

function Viewport({ kind, label, labelX, h }) {
  return (
    <div className="flex w-[379px] shrink-0 flex-col overflow-hidden">
      <div className="flex h-[18px] pl-2 leading-[17px] text-[#c8c8c8]">
        <span className="w-[40px]">View</span><span className="w-[58px]">Shading</span><span className="w-[58px]">Lighting</span>
        <span className="w-[44px]">Show</span><span className="w-[62px]">Renderer</span><span>Panels</span>
      </div>
      <VpToolbar />
      <Svg w={380} h={h} className="block bg-[#5d5d5d]">
        <Scene kind={kind} />
        <text x={labelX} y={kind === "top" || kind === "persp" ? 172 : 171} fill="#fff" fontFamily="Liberation Sans, sans-serif" fontWeight="700" fontSize="10" textAnchor="middle">{label}</text>
      </Svg>
    </div>
  );
}

function Viewports() {
  return (
    <div className="flex h-[452px] w-[773px] shrink-0 flex-col overflow-hidden">
      <div className="flex h-[225px] shrink-0 items-start">
        <div className="ml-[4px] pt-[3px]"><Viewport kind="top" label="top -Y" labelX={181.5} h={181} /></div>
        <div className={`ml-[3px] mt-[75px] h-[74px] w-px ${DOTS}`} />
        <div className="ml-[2px] mt-[2px] border border-[#8c8c8c]"><Viewport kind="persp" label="persp Y" labelX={181.500} h={181} /></div>
      </div>
      <div className={`ml-[258px] h-px w-[257px] shrink-0 ${DOTS}`} />
      <div className="flex items-start pt-[3px]">
        <div className="ml-[4px]"><Viewport kind="front" label="front -Z" labelX={181} h={180} /></div>
        <div className={`ml-[3px] mt-[72px] h-[74px] w-px ${DOTS}`} />
        <div className="ml-[3px]"><Viewport kind="side" label="side -X" labelX={182} h={180} /></div>
      </div>
    </div>
  );
}

/* ---------- Channel box ---------- */

function ChannelBox() {
  return (
    <div className="flex h-[452px] w-[265px] shrink-0 flex-col border-l-2 border-[#373737] bg-[#444]">
      <div className="ml-[201px] mt-[2px] flex h-[16px] items-center gap-[7px]">
        <Svg w={14} h={14}><path d="M7 5V8L3 11M7 8L11 11" stroke={G} strokeWidth="1.500" /><path d="M4 4L7 0L10 4Z" fill="#6c9c36" /><path d="M0 9L5 13H0Z" fill="#4a7fe0" /><path d="M14 9L9 13H14Z" fill="#d9484a" /></Svg>
        <Svg w={14} h={14}><path d="M4.500 12A5.300 5.300 0 1 1 10 12" stroke={T} strokeWidth="3.400" /><circle cx="7" cy="8" r="2" fill={T} /><path d="M9 9L13 8L12 13Z" fill="#777" /></Svg>
        <Svg w={14} h={14}><path d="M1.500 0V12.500H14" stroke="#8a8a8a" /><path d="M3 11L12 2" stroke={T} strokeWidth="1.600" /><path d="M8 .5H13.500V6Z" fill={T} /></Svg>
      </div>
      <div className="ml-[12px] mt-[5px] flex text-[#c8c8c8]">
        <span className="w-[63px]">Channels</span><span className="w-[35px]">Edit</span><span className="w-[49px]">Object</span><span>Show</span>
      </div>
      <div className="mt-[107px] text-center text-[11px] font-bold leading-[13px] tracking-[-0.33px] text-[#b8b8b8]">
        Select objects in the scene to view,<br />edit and set keyframes on channels<br />(attributes)
      </div>
      <div className={`ml-[89px] mt-[108px] h-px w-[86px] shrink-0 ${DOTS}`} />
      <div className="ml-[4px] mt-[8px] flex h-[144px] w-[256px] shrink-0 flex-col border border-[#2e2e2e] border-t-[#373737]">
        <div className="flex h-[17px] shrink-0 bg-[#373737] pl-px pt-px">
          <div className="w-[58px] rounded-t-[2px] bg-[#444] pl-[10px] leading-[18px] text-white">Display</div>
          <div className="ml-[2px] w-[47px] rounded-t-[3px] border border-b-0 border-[#2c2c2c] bg-[#3a3a3a] pl-[9px] leading-[16px] text-[#858585]">Anim</div>
        </div>
        <div className="flex pl-[10px] pt-[2px] text-[#c8c8c8]">
          <span className="w-[46px]">Layers</span><span className="w-[57px]">Options</span><span>Help</span>
        </div>
        <div className="ml-[157px] mt-[5px] flex h-[14px] gap-[7.5px]">
          <Svg w={16} h={13}><path d="M0 7.500L7 3V11Z" fill={G} /><path d="M7 7L11 3L15 7H13V11H9V7Z" fill={T} /></Svg>
          <Svg w={16} h={13}><path d="M0 7.500L7 3V11Z" fill={G} /><path d="M9 4H13V7H15L11 11L7 7H9Z" fill={T} /></Svg>
          <Svg w={16} h={13} className="ml-[2px]"><path d="M0 7.500L7 3L12 7.500L7 12Z" fill={G} /><path d="M12 0V7M8.500 3.500H15.500" stroke={T} strokeWidth="2" /></Svg>
          <Svg w={16} h={13}><path d="M0 7.500L7 3L12 7.500L7 12Z" fill={G} /><circle cx="11" cy="4" r="3.500" fill={T} /></Svg>
        </div>
        <div className="ml-[3px] mt-[8px] h-[63px] w-[247px] shrink-0 bg-[#2a2a2a]" />
        <div className="ml-[3px] flex h-[11px] w-[247px] shrink-0 items-center bg-[#373737] px-[3px]">
          <Svg w={5} h={9}><path d="M5 0V9L0 4.500Z" fill="#a8a8a8" /></Svg>
          <div className="ml-[5px] h-[10px] w-[154px] rounded-[4px] bg-[#5d5d5d]" />
          <Svg w={5} h={9} className="ml-auto"><path d="M0 0V9L5 4.500Z" fill="#a8a8a8" /></Svg>
        </div>
      </div>
    </div>
  );
}

function SideTabs() {
  return (
    <div className="flex h-[452px] w-[16px] flex-col bg-[#373737] pt-px text-[10.5px] leading-[14px]">
      <div className="h-[155px] w-[15px] bg-[#444] pt-[10px] tracking-[0.17px] text-white [writing-mode:vertical-rl]">Channel Box / Layer Editor</div>
      <div className="mt-[2px] h-[103px] w-[15px] rounded-r-[3px] border border-l-0 border-[#2c2c2c] bg-[#3a3a3a] pt-[10px] tracking-[0.35px] text-[#858585] [writing-mode:vertical-rl]">Attribute Editor</div>
      <div className="mt-[1px] h-[110px] w-[15px] rounded-r-[3px] border border-l-0 border-[#2c2c2c] bg-[#3a3a3a] pt-[10px] tracking-[0.38px] text-[#858585] [writing-mode:vertical-rl]">Modeling Toolkit</div>
    </div>
  );
}

/* ---------- Time slider ---------- */

const FRAMES = Array.from({ length: 24 }, (_, i) => (i + 1) * 5);

const PLAY = [
  "M0 1V13H2V1ZM9 2L3 7L9 12ZM16 2L10 7L16 12Z",
  "M2 1V13H4V1ZM13 2L5 7L13 12Z",
  "M14 2L6 7L14 12Z",
  "M14 0L2 7L14 14Z",
  "M3 0L15 7L3 14Z",
  "M3 2L11 7L3 12Z",
  "M3 2L11 7L3 12ZM12 1V13H14V1Z",
  "M0 2L6 7L0 12ZM7 2L13 7L7 12ZM14 1V13H16V1Z",
];

function TimeSlider() {
  return (
    <div className="flex h-[52px] items-center border-y-2 border-[#373737]">
      <div className={`ml-[3px] h-[40px] w-[5px] shrink-0 ${DOTS}`} />
      <div className="ml-[8px] w-[1059px] shrink-0">
        <div className="flex h-[8px] pl-[8px]">
          <div className="mr-[26.200px] h-full w-[9px] shrink-0 bg-[#555]" />
          {FRAMES.map((f) => <div key={f} className={`h-full shrink-0 border-l border-[#1a1a1a] ${f === 120 ? "w-px" : "w-[43.4px]"}`} />)}
        </div>
        <div className="flex h-[32px] overflow-hidden bg-[#2b2b2b] pl-[8px] text-[10.500px] text-[#9a9a9a]">
          <div className="mr-[26.200px] flex h-full w-[9px] shrink-0 items-end justify-end bg-[#373737] pb-px leading-[16px] text-white"><span className="-mr-[4px] bg-[#2b2b2b]">1</span></div>
          {FRAMES.map((f) => (
            <div key={f} className="flex h-full w-[43.4px] shrink-0 flex-col">
              <span className="h-[16px] pl-[7px] leading-[15px] tracking-[-0.3px]">{f}</span>
              <span className="h-[15px] w-px bg-[#9a9a9a]" />
            </div>
          ))}
        </div>
        <div className="flex h-[8px] pl-[8px]">
          <div className="h-full w-[9px] shrink-0 bg-[#555]" />
          <div className="flex h-[2px] w-[1033px] bg-[#666] pl-[26.200px]">
            {FRAMES.map((f) => <div key={f} className={`h-[8px] shrink-0 border-l border-[#1a1a1a] ${f === 120 ? "w-px" : "w-[43.4px]"}`} />)}
          </div>
        </div>
      </div>
      <div className="ml-[9px] h-5 w-[50px] shrink-0 rounded-[2px] bg-[#2b2b2b] pl-[5px] text-[11px] leading-[21px] text-[#c8c8c8]">1</div>
      <div className="ml-[10px] flex gap-[12px]">
        {PLAY.map((d, i) => (
          <Svg key={i} w={16} h={18} vb="0 -2 16 18">
            <path d={d} fill={G} />
            {i === 2 && <path d="M3.500 -1V15M2.500 1V13M4.500 1V13" stroke="#e0803c" />}
            {i === 5 && <path d="M12.500 -1V15M11.500 1V13M13.500 1V13" stroke="#e0803c" />}
          </Svg>
        ))}
      </div>
    </div>
  );
}

/* ---------- Range slider ---------- */

function RangeSlider() {
  return (
    <div className="flex h-[38px] items-center border-b-2 border-[#373737] tracking-[-0.32px] text-[#c8c8c8]">
      <div className={`ml-[3px] h-[28px] w-[5px] shrink-0 ${DOTS}`} />
      <div className="ml-[9px] h-5 w-[50px] shrink-0 rounded-[2px] bg-[#2b2b2b] pl-[5px] text-[11px] leading-[21px]">1</div>
      <div className="ml-[9px] flex h-5 w-[536px] shrink-0 items-center rounded-[2px] bg-[#2b2b2b] pl-[2px] text-[11px]">
        <div className="h-4 w-[8px] bg-[#9a9a9a]" />
        <div className="flex h-4 w-[314px] items-center justify-between bg-[#444] pl-[8px] pr-[8px]">
          <span className="pt-px">1</span><span className={`ml-[14px] h-[11px] w-[5px] ${DOTS}`} /><span className="pt-px">120</span>
        </div>
        <div className="h-4 w-[8px] rounded-r-[2px] bg-[#9a9a9a]" />
      </div>
      <div className="ml-[9px] h-5 w-[50px] shrink-0 rounded-[2px] bg-[#2b2b2b] pl-[5px] text-[11px] leading-[21px]">200</div>
      <Sep className="ml-5" />
      <Svg w={15} h={20} className="ml-[26px]"><path d="M0 3H8V19L4 15L0 19Z" fill="#e0753c" /><path d="M9 1V9M5 5H13" stroke="#444" strokeWidth="4" /><path d="M9 1V9M5 5H13" stroke="#ccc" strokeWidth="2" /></Svg>
      <Sep className="ml-[20px]" />
      <Svg w={9} h={6} className="-mt-1 ml-[24px]"><path d="M1 .5H8L4.500 5Z" stroke="#9a9a9a" /></Svg>
      <div className="ml-[7px] h-5 w-[102px] shrink-0 rounded-[3px] border border-[#565656] pl-[5px] leading-[20px]">No Character Set</div>
      <Svg w={9} h={6} className="-mt-1 ml-[14px]"><path d="M1 .5H8L4.500 5Z" stroke="#9a9a9a" /></Svg>
      <div className="ml-[7px] h-5 w-[102px] shrink-0 rounded-[3px] border border-[#565656] pl-[5px] leading-[20px]">No Anim Layer</div>
      <Sep className="ml-[20px]" />
      <div className="ml-[22px] flex h-[19px] w-[95px] shrink-0 rounded-[2px] bg-[#5d5d5d] text-[11px]">
        <span className="flex-1 pl-[3px] leading-[20px]">24 fps</span>
        <span className="flex w-[20px] items-center justify-center border-l border-[#484848]"><Down w={9} fill="#bdbdbd" /></span>
      </div>
      <Svg w={17} h={15} className="ml-[15px]"><path d="M2 8V6Q2 3.500 5 3.500H12M15 7V9Q15 11.500 12 11.500H5" stroke={G} strokeWidth="2" /><path d="M11 0L16 3.500L11 7ZM6 8L1 11.500L6 15Z" fill={G} /></Svg>
      <BlueBox className="ml-[12px] w-[23px]"><Svg w={19} h={19}><path d="M1 5H18V17H1Z" fill="#e08a4a" stroke="#444" /><path d="M2 6.500H17M2 15.500H17" stroke="#333" strokeDasharray="1.500 1.500" strokeWidth="1.500" /><path d="M3 8.500H16V13.500H3Z" fill={G} stroke="#444" /><path d="M7 8V14M11 8V14" stroke="#444" /><path d="M11 0L17 4L11 8Z" fill="#ddd" stroke="#444" strokeWidth=".6" /></Svg></BlueBox>
      <Sep className="ml-[19px]" />
      <Svg w={18} h={14} className="ml-[22px]"><path d="M0 4H4L9 0V14L4 10H0Z" fill={G} /><path d="M11 4Q13 7 11 10M13 2.500Q16 7 13 11.500M15.500 1Q19 7 15.500 13" stroke={G} strokeWidth="1.100" /></Svg>
      <Svg w={16} h={16} className="ml-[12px]"><path d="M14 6A6.500 6.500 0 0 0 2.500 4.500M3 .5V5H7.500M2 10A6.500 6.500 0 0 0 13.500 11.500M13 15.500V11H8.500" stroke="#a0a0a0" strokeWidth="1.500" /><path d="M8 5V11" stroke="#e0753c" strokeWidth="2.400" /></Svg>
      <Svg w={18} h={18} className="ml-[11px]"><Gear x={4.500} y={5} r={2.800} c="#b0b0b0" /><circle cx="14" cy="4.500" r="2" fill="#e0853c" /><path d="M7 8L10 7L13 8L10 12L13 14L12 17.500M10.500 11L8.500 14H5M13 8L14 10.500L17 10" stroke="#e0853c" strokeWidth="1.800" /></Svg>
    </div>
  );
}

/* ---------- Command line ---------- */

function CommandLine() {
  return (
    <div className="flex h-[36px] items-center text-[#c8c8c8]">
      <div className={`ml-[3px] h-[28px] w-[5px] shrink-0 ${DOTS}`} />
      <Svg w={16} h={16} className="ml-[8px]"><circle cx="8" cy="8" r="8" fill="#7db02e" /><path d="M5.500 6Q5.500 3.500 8 3.500T10.500 6Q10.500 7.500 8 8.500V10" stroke="#333" strokeWidth="1.800" /><circle cx="8" cy="12.500" r="1.200" fill="#333" /></Svg>
      <span className="ml-[8px] w-[539px] shrink-0 pt-px text-[10px] tracking-[-0.3px] text-[#e0e0e0]">Select Tool: select an object</span>
      <div className="h-full w-[2px] bg-[#373737]" />
      <div className={`ml-[3px] h-[28px] w-[5px] shrink-0 ${DOTS}`} />
      <span className="ml-[8px] w-[29px] shrink-0 text-[#e0e0e0]">MEL</span>
      <div className="h-5 w-[273px] shrink-0 rounded-[2px] bg-[#2b2b2b]" />
      <div className={`ml-[2px] h-[11px] w-px ${DOTS}`} />
      <div className="ml-[2px] h-5 w-[425px] shrink-0 overflow-hidden rounded-[2px] bg-[#ff5a5a] pl-[5px] text-[11px] leading-[22px] tracking-[-0.04px] text-[#3a2f2f]">
        // Error: file: C:/Users/vshan/OneDrive/Desktop/Maya2024/scripts/others/fluidSetS
      </div>
      <Svg w={19} h={19} className="ml-[9px]"><path d="M0 0H19V4H0ZM0 5H19V19H0Z" fill={G} /><path d="M2 2H8" stroke="#444" strokeWidth="1.500" strokeDasharray="1.500 1" /><text x="9.500" y="15.500" fontSize="11" fontWeight="700" fill="#444" textAnchor="middle" fontFamily="Liberation Sans">{"{;}"}</text></Svg>
    </div>
  );
}

/* ---------- Taskbar ---------- */

function TaskItem({ children, className = "w-[49px]", line = "" }) {
  return (
    <div className={`flex h-[40px] shrink-0 flex-col items-center ${className}`}>
      <div className="flex h-[38px] items-center justify-center pt-px">{children}</div>
      <div className={`h-[2px] ${line}`} />
    </div>
  );
}

function Taskbar() {
  return (
    <div className="flex h-[40px] items-center bg-linear-to-r from-[#cbe6ef] via-[#d7e7f2] to-[#d9dcea] text-black">
      <Svg w={16} h={16} className="ml-4"><path d="M0 2.200L6.500 1.300V7.500H0ZM7.500 1.200L16 0V7.500H7.500ZM0 8.500H6.500V14.700L0 13.800ZM7.500 8.500H16V16L7.500 14.800Z" fill="#000" /></Svg>
      <div className="ml-4 flex h-[40px] w-[288px] shrink-0 items-center border border-[#c4c8ca] bg-white">
        <Svg w={17} h={17} className="ml-[11px]"><circle cx="10.500" cy="6" r="5.300" stroke="#222" strokeWidth="1.300" /><path d="M6.500 10L1 15.500" stroke="#222" strokeWidth="1.300" /></Svg>
        <span className="ml-[11px] pt-px text-[14px] tracking-[-0.050px] text-[#333]">Type here to search</span>
      </div>
      <TaskItem><Svg w={17} h={16}><path d="M1 4.500H11V11.500H1ZM1 2V.5H11V2M1 14V15.500H11V14" stroke="#000" strokeWidth="1.200" /><path d="M14.500 0V4M14.500 9V16" stroke="#000" strokeWidth="1.500" /><path d="M13 5H16V8H13Z" fill="#000" /></Svg></TaskItem>
      <TaskItem className="ml-px w-[50px]" line="w-[40px] bg-[#0078d7]"><Svg w={22} h={19}><path d="M0 1H8L10 3H21V18H0Z" fill="#e8a317" /><path d="M0 5H22V18H0Z" fill="#ffd868" /><path d="M4 18V12Q4 10 6 10H16Q18 10 18 12V18H14V14H8V18Z" fill="#3e94dd" /></Svg></TaskItem>
      <TaskItem className="w-[48px]" line="w-[40px] bg-linear-to-r from-[#0078d7] from-80% to-[#62a8e0] to-80%"><Svg w={27} h={27}><circle cx="12.500" cy="12.500" r="12" fill="#fff" /><path d="M12.500 7H23.200A12 12 0 0 1 13 24.500L17.500 15Z" fill="#fcc934" /><path d="M2.100 6.500A12 12 0 0 0 13 24.500L17.300 15.500L12.500 12.500L7.500 15Z" fill="#2da14d" /><path d="M2.100 6.500L7.500 15.500L12.500 12.500L12.500 7Z" fill="#2da14d" /><path d="M2.600 6A12 12 0 0 1 22.900 6.800H12.500Q8 8 7.500 12Z" fill="#e33b2e" /><circle cx="12.500" cy="12.500" r="5.600" fill="#fff" /><circle cx="12.500" cy="12.500" r="4.500" fill="#4285f4" /><circle cx="19" cy="19" r="7.500" fill="#77746a" /><path d="M15 25Q16 16 19 14Q22 16 23 25Z" fill="#d4cfc2" /><circle cx="19" cy="16" r="2.500" fill="#555" /></Svg></TaskItem>
      <TaskItem><Svg w={18} h={24}><rect width="18" height="24" rx="1" fill="#5c6b78" /><path d="M2 2H16V6H2Z" fill="#4cc8f4" /><path d="M2 8H6V12H2ZM7 8H11V12H7ZM12 8H16V12H12ZM2 13H6V17H2ZM7 13H11V17H7ZM2 18H6V22H2ZM7 18H11V22H7Z" fill="#d8e0e6" /><path d="M12 13H16V22H12Z" fill="#1a5fb4" /></Svg></TaskItem>
      <TaskItem><Svg w={22} h={20}><circle cx="11" cy="4" r="3.300" fill="#7b83eb" /><circle cx="18.500" cy="5" r="2.500" fill="#5059c9" /><path d="M15 8H22V14Q22 17 18 17Z" fill="#5059c9" /><path d="M6 8H17V15Q16 20 11 20T6 15Z" fill="#7b83eb" /><path d="M0 5H11V16H0Z" fill="#4b53bc" /><path d="M3 7.800H8M5.500 8V13.500" stroke="#fff" strokeWidth="1.500" /></Svg></TaskItem>
      <TaskItem><Svg w={24} h={20}><path d="M0 14L12 5H4V3H13L10 1L12 0L21 7Q24 10 23 14Q21 19 15 19T7 13L3 16Z" fill="#ea7600" /><circle cx="15" cy="12" r="5" fill="#fff" /><circle cx="15" cy="12" r="3" fill="#265787" /></Svg></TaskItem>
      <TaskItem><Svg w={24} h={24}><ellipse cx="12" cy="9" rx="11" ry="7" transform="rotate(-22 12 9)" fill="#fff" stroke="#d9333f" strokeWidth="1.200" /><ellipse cx="12" cy="9" rx="8.500" ry="5" transform="rotate(-22 12 9)" stroke="#e8a0a4" /><path d="M17 2L13 18M8 4L17 16" stroke="#888" strokeWidth="1.800" /><circle cx="13" cy="19.500" r="2.500" stroke="#1b87d0" strokeWidth="1.600" /><circle cx="19" cy="17" r="2.500" stroke="#1b87d0" strokeWidth="1.600" /></Svg></TaskItem>
      <TaskItem><Svg w={24} h={24}><circle cx="12" cy="12" r="12" fill="#1d2528" /><circle cx="12" cy="12" r="8.500" stroke="#28737a" strokeWidth="1.500" /><path d="M12 4Q16 7 16 12L13.500 14V20H10.500V14L8 12Q8 7 12 4Z" fill="#6ad3c4" /></Svg></TaskItem>
      <TaskItem className="ml-px w-[48px] bg-[#f0f6fa]" line="w-[48px] bg-[#0078d7]"><MayaLogo w={22} h={24} /></TaskItem>
      <div className="ml-auto flex items-center pr-[17px]">
        <Svg w={12} h={8}><path d="M1 7L6 1.500L11 7" stroke="#000" strokeWidth="1.300" /></Svg>
        <Svg w={17} h={14} className="ml-[9px]"><path d="M1 5H3.500L7 1.500V12.500L3.500 9H1Z" stroke="#000" strokeWidth="1.200" /><path d="M9 4.500Q10.500 7 9 9.500M11 3Q13.500 7 11 11" stroke="#000" /><path d="M13.500 1Q17 7 13.500 13" stroke="#888" /></Svg>
        <Svg w={14} h={14} className="ml-[10px]"><path d="M1 13Q1 2 13 1M4 13Q4 5 13 4.500M7 13Q7.500 8 13 7.500" stroke="#000" strokeWidth="1.200" /><circle cx="11.500" cy="11.500" r="2" fill="#000" /></Svg>
        <Svg w={16} h={10} className="ml-[9px]"><path d="M.6 .6H13V9.400H.6Z" stroke="#000" strokeWidth="1.200" /><path d="M2 2.500H6V7.500H2ZM13.500 3H15.500V7H13.500Z" fill="#000" /></Svg>
        <span className="ml-[10px] w-[24px] text-[11.500px] tracking-[-0.200px]">ENG</span>
        <div className="ml-[7px] w-[62px] text-center text-[11px] leading-[18px] tracking-[-0.050px]">1:36 PM<br />1/26/2024</div>
        <Svg w={25} h={25} className="ml-[12px] mt-[6px]"><path d="M1 0H17V13H12V16L8 13H1Z" fill="#000" /><path d="M3 3H15M3 6.500H15M3 10H11" stroke="#fff" /><circle cx="16.500" cy="16.500" r="7.500" fill="#dcdcdc" stroke="#777" /><text x="16.500" y="20.500" fontSize="11" fill="#000" textAnchor="middle" fontFamily="Open Sans">1</text></Svg>
      </div>
    </div>
  );
}

export default function App() {
  return (
    <div className="flex h-[768px] w-[1366px] flex-col overflow-hidden whitespace-nowrap bg-[#444] font-['Open_Sans','Noto_Sans',sans-serif] text-[11.5px] leading-[18px] tracking-[-0.15px]">
      <TitleBar />
      <MenuBar />
      <StatusLine />
      <div className="h-[2px] shrink-0" />
      <Shelf />
      <div className="flex h-[452px] shrink-0">
        <ToolBox />
        <Outliner />
        <Viewports />
        <ChannelBox />
        <SideTabs />
      </div>
      <TimeSlider />
      <RangeSlider />
      <CommandLine />
      <Taskbar />
    </div>
  );
}
